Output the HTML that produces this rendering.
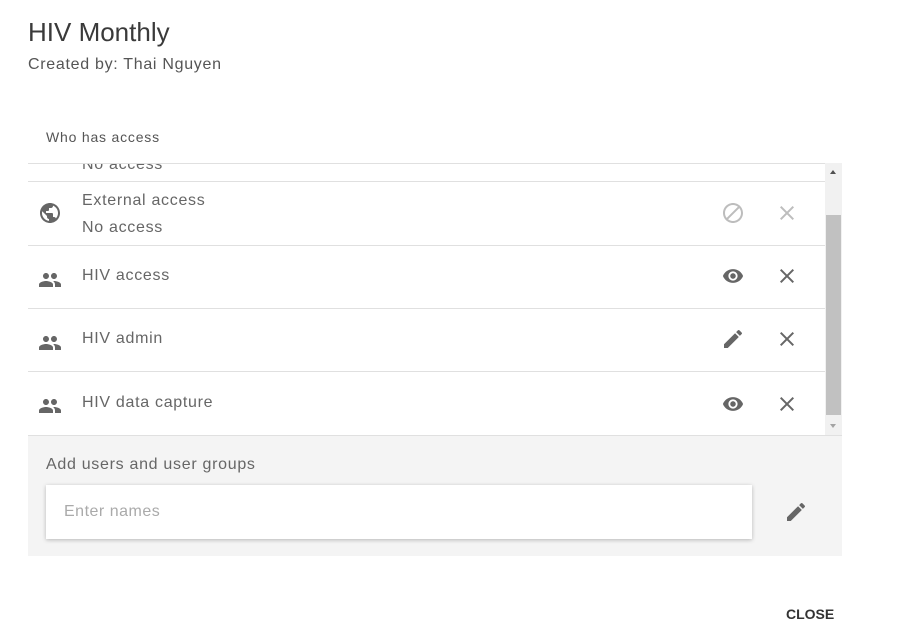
<!DOCTYPE html>
<html><head><meta charset="utf-8"><style>
body{margin:0;width:900px;height:629px;background:#fff;font-family:"Liberation Sans",sans-serif;position:relative;overflow:hidden;color:#333}
.a{position:absolute}
.t{color:#666;font-size:16px;letter-spacing:0.7px}
.line{position:absolute;left:28px;width:797px;height:1px;background:#e0e0e0}
svg{position:absolute;width:24px;height:24px}
</style></head><body>
<div class="a" style="left:28px;top:17px;font-size:26px;color:#3a3a3a">HIV Monthly</div>
<div class="a" style="left:28px;top:56px;font-size:16px;color:#555;letter-spacing:0.7px">Created by: Thai Nguyen</div>
<div class="a" style="left:46px;top:129px;font-size:14px;color:#555;letter-spacing:0.8px">Who has access</div>

<div class="a" style="left:28px;top:164px;width:797px;height:17px;overflow:hidden">
 <div class="a t" style="left:54px;top:-8px">No access</div>
</div>
<div class="line" style="top:163px"></div>
<div class="line" style="top:181px"></div>
<div class="line" style="top:245px"></div>
<div class="line" style="top:308px"></div>
<div class="line" style="top:371px"></div>
<div class="line" style="top:435px;width:814px"></div>

<div class="a" style="left:825px;top:163px;width:17px;height:272px;background:#f1f1f1"></div>
<div class="a" style="left:826px;top:215px;width:15px;height:200px;background:#c1c1c1"></div>
<div class="a" style="left:830px;top:170px;width:0;height:0;border-left:3px solid transparent;border-right:3px solid transparent;border-bottom:4px solid #505050"></div>
<div class="a" style="left:830px;top:424px;width:0;height:0;border-left:3px solid transparent;border-right:3px solid transparent;border-top:4px solid #a3a3a3"></div>

<svg style="left:38px;top:201px" viewBox="0 0 24 24"><path fill="#666" d="M12 2C6.48 2 2 6.48 2 12s4.48 10 10 10 10-4.48 10-10S17.52 2 12 2zm-1 17.930c-3.95-.49-7-3.85-7-7.93 0-.62.08-1.21.21-1.79L9 15v1c0 1.1.9 2 2 2v1.93zm6.9-2.54c-.26-.81-1-1.39-1.9-1.39h-1v-3c0-.55-.45-1-1-1H8v-2h2c.55 0 1-.45 1-1V7h2c1.1 0 2-.9 2-2v-.41c2.93 1.19 5 4.06 5 7.41 0 2.08-.8 3.970-2.1 5.39z"/></svg>
<div class="a t" style="left:82px;top:192px">External access</div>
<div class="a t" style="left:82px;top:219px">No access</div>
<svg style="left:721px;top:201px" viewBox="0 0 24 24"><path fill="#bdbdbd" d="M12 2C6.48 2 2 6.48 2 12s4.48 10 10 10 10-4.48 10-10S17.52 2 12 2zM4 12c0-4.42 3.58-8 8-8 1.85 0 3.55.63 4.9 1.69L5.690 16.9C4.63 15.55 4 13.85 4 12zm8 8c-1.85 0-3.55-.63-4.9-1.69L18.31 7.1C19.37 8.45 20 10.15 20 12c0 4.42-3.58 8-8 8z"/></svg>
<svg style="left:775px;top:201px" viewBox="0 0 24 24"><path fill="#bdbdbd" d="M19 6.41L17.59 5 12 10.59 6.41 5 5 6.41 10.59 12 5 17.59 6.41 19 12 13.41 17.59 19 19 17.59 13.41 12z"/></svg>

<svg style="left:38px;top:268px" viewBox="0 0 24 24"><path fill="#666" d="M16 11c1.66 0 2.99-1.34 2.99-3S17.66 5 16 5c-1.66 0-3 1.34-3 3s1.34 3 3 3zm-8 0c1.66 0 2.99-1.34 2.99-3S9.66 5 8 5C6.34 5 5 6.34 5 8s1.34 3 3 3zm0 2c-2.33 0-7 1.17-7 3.5V19h14v-2.5c0-2.33-4.67-3.5-7-3.5zm8 0c-.29 0-.62.02-.97.05 1.16.84 1.97 1.97 1.97 3.45V19h6v-2.5c0-2.33-4.67-3.5-7-3.5z"/></svg>
<div class="a t" style="left:82px;top:267px">HIV access</div>
<svg style="left:722px;top:265px;width:22px;height:22px" viewBox="0 0 24 24"><path fill="#666" d="M12 4.5C7 4.5 2.73 7.61 1 12c1.73 4.39 6 7.5 11 7.5s9.27-3.11 11-7.5c-1.73-4.39-6-7.5-11-7.5zM12 17c-2.76 0-5-2.24-5-5s2.24-5 5-5 5 2.24 5 5-2.240 5-5 5zm0-8c-1.66 0-3 1.34-3 3s1.34 3 3 3 3-1.34 3-3-1.34-3-3-3z"/></svg>
<svg style="left:775px;top:264px" viewBox="0 0 24 24"><path fill="#666" d="M19 6.41L17.59 5 12 10.59 6.41 5 5 6.41 10.59 12 5 17.59 6.41 19 12 13.41 17.59 19 19 17.59 13.41 12z"/></svg>

<svg style="left:38px;top:331px" viewBox="0 0 24 24"><path fill="#666" d="M16 11c1.66 0 2.99-1.34 2.99-3S17.66 5 16 5c-1.66 0-3 1.34-3 3s1.34 3 3 3zm-8 0c1.66 0 2.99-1.34 2.99-3S9.66 5 8 5C6.34 5 5 6.34 5 8s1.34 3 3 3zm0 2c-2.33 0-7 1.17-7 3.5V19h14v-2.5c0-2.33-4.67-3.5-7-3.5zm8 0c-.29 0-.62.02-.97.05 1.16.84 1.97 1.97 1.97 3.45V19h6v-2.5c0-2.33-4.67-3.5-7-3.5z"/></svg>
<div class="a t" style="left:82px;top:330px">HIV admin</div>
<svg style="left:721px;top:327px" viewBox="0 0 24 24"><path fill="#666" d="M3 17.25V21h3.75L17.81 9.94l-3.75-3.75L3 17.25zM20.71 7.04c.39-.39.39-1.02 0-1.41l-2.34-2.34c-.39-.39-1.02-.39-1.41 0l-1.83 1.83 3.75 3.75 1.830-1.83z"/></svg>
<svg style="left:775px;top:327px" viewBox="0 0 24 24"><path fill="#666" d="M19 6.41L17.59 5 12 10.59 6.41 5 5 6.410 10.59 12 5 17.59 6.41 19 12 13.41 17.59 19 19 17.59 13.41 12z"/></svg>

<svg style="left:38px;top:394px" viewBox="0 0 24 24"><path fill="#666" d="M16 11c1.66 0 2.99-1.34 2.99-3S17.66 5 16 5c-1.66 0-3 1.34-3 3s1.34 3 3 3zm-8 0c1.66 0 2.99-1.34 2.99-3S9.66 5 8 5C6.34 5 5 6.34 5 8s1.34 3 3 3zm0 2c-2.33 0-7 1.17-7 3.5V19h14v-2.5c0-2.33-4.67-3.5-7-3.5zm8 0c-.29 0-.62.02-.97.05 1.16.84 1.97 1.97 1.97 3.45V19h6v-2.5c0-2.33-4.67-3.5-7-3.5z"/></svg>
<div class="a t" style="left:82px;top:394px">HIV data capture</div>
<svg style="left:722px;top:393px;width:22px;height:22px" viewBox="0 0 24 24"><path fill="#666" d="M12 4.5C7 4.5 2.73 7.61 1 12c1.73 4.39 6 7.5 11 7.5s9.27-3.11 11-7.5c-1.73-4.39-6-7.5-11-7.5zM12 17c-2.76 0-5-2.24-5-5s2.24-5 5-5 5 2.24 5 5-2.24 5-5 5zm0-8c-1.66 0-3 1.34-3 3s1.34 3 3 3 3-1.34 3-3-1.34-3-3-3z"/></svg>
<svg style="left:775px;top:392px" viewBox="0 0 24 24"><path fill="#666" d="M19 6.41L17.59 5 12 10.59 6.41 5 5 6.41 10.59 12 5 17.59 6.41 19 12 13.41 17.59 19 19 17.59 13.41 12z"/></svg>

<div class="a" style="left:28px;top:436px;width:814px;height:120px;background:#f4f4f4"></div>
<div class="a t" style="left:46px;top:456px">Add users and user groups</div>
<div class="a" style="left:46px;top:485px;width:706px;height:54px;background:#fff;box-shadow:0 1px 4px rgba(0,0,0,0.25)"></div>
<div class="a" style="left:64px;top:503px;font-size:16px;color:#aaa;letter-spacing:0.5px">Enter names</div>
<svg style="left:784px;top:500px" viewBox="0 0 24 24"><path fill="#666" d="M3 17.25V21h3.75L17.81 9.94l-3.75-3.75L3 17.25zM20.71 7.04c.39-.39.39-1.02 0-1.41l-2.34-2.34c-.39-.39-1.02-.39-1.41 0l-1.83 1.83 3.75 3.75 1.83-1.83z"/></svg>

<div class="a" style="left:786px;top:606px;font-size:14px;font-weight:bold;color:#333">CLOSE</div>
</body></html>
